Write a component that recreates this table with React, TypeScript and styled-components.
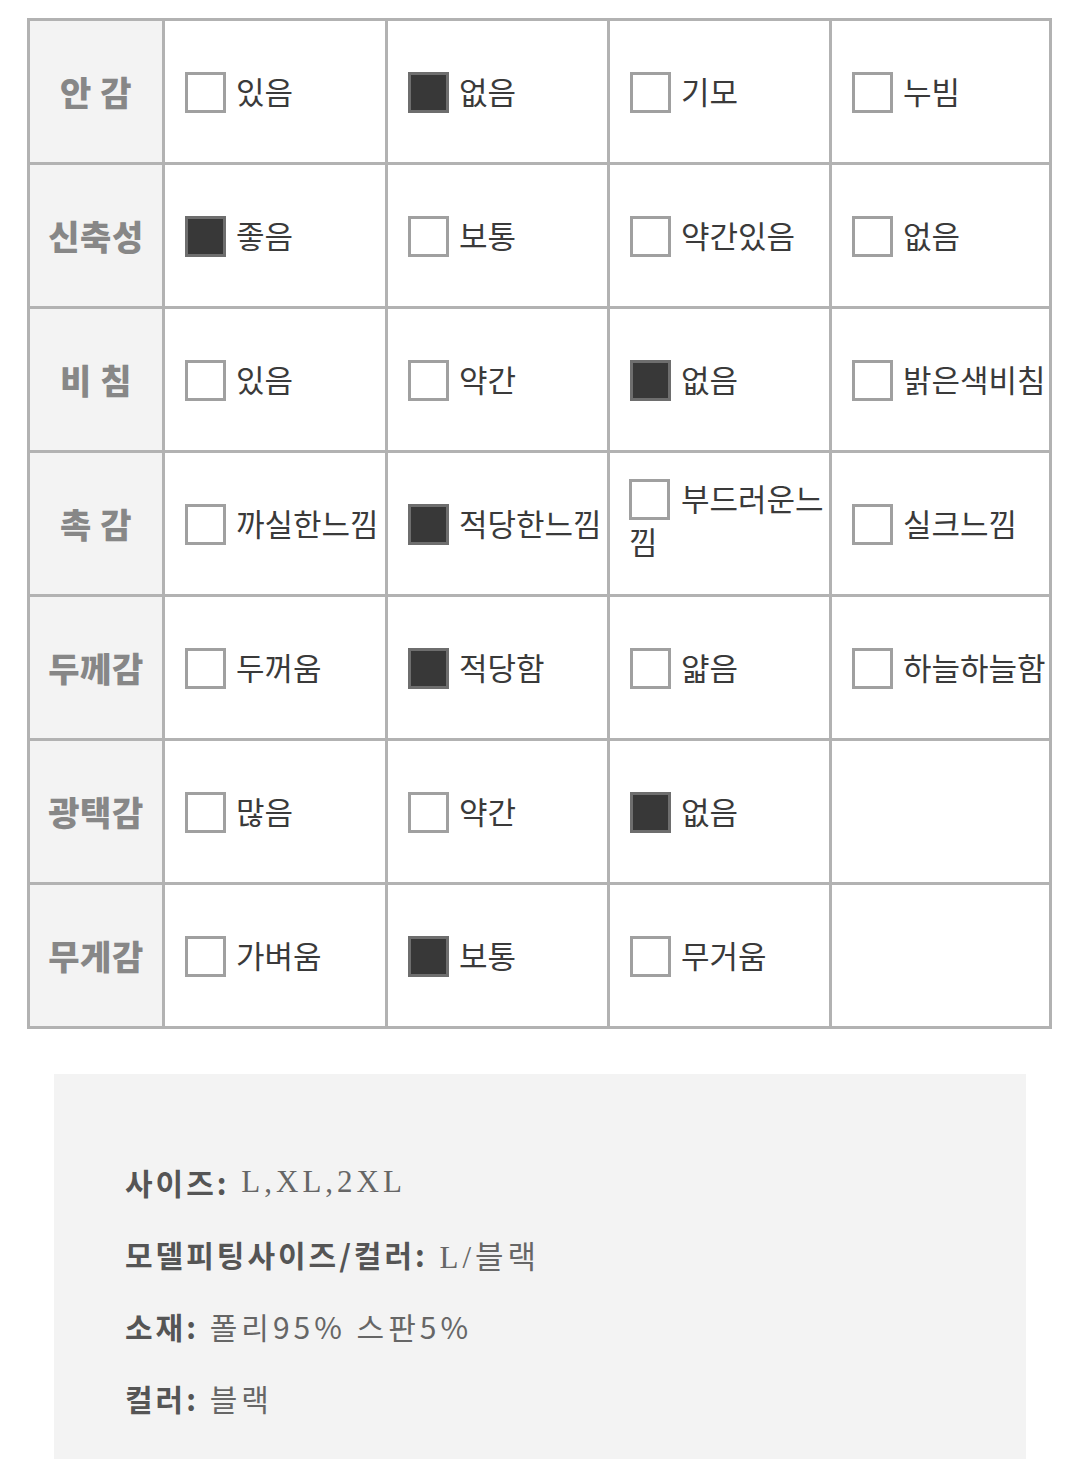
import styled, { createGlobalStyle } from 'styled-components';

const GlobalStyle = createGlobalStyle`
  body {
    margin: 0;
    background: #fff;
    font-family: "Noto Sans CJK KR", "Noto Sans", sans-serif;
  }
`;

interface IRow {
  label: string;
  options: string[];
  checked: number;
}

const rows: IRow[] = [
  { label: '안 감', options: ['있음', '없음', '기모', '누빔'], checked: 1 },
  { label: '신축성', options: ['좋음', '보통', '약간있음', '없음'], checked: 0 },
  { label: '비 침', options: ['있음', '약간', '없음', '밝은색비침'], checked: 2 },
  { label: '촉 감', options: ['까실한느낌', '적당한느낌', '부드러운느 낌', '실크느낌'], checked: 1 },
  { label: '두께감', options: ['두꺼움', '적당함', '얇음', '하늘하늘함'], checked: 1 },
  { label: '광택감', options: ['많음', '약간', '없음'], checked: 2 },
  { label: '무게감', options: ['가벼움', '보통', '무거움'], checked: 1 },
];

const info = [
  { label: '사이즈:', value: 'L,XL,2XL', serif: true },
  { label: '모델피팅사이즈/컬러:', value: 'L/블랙', serif: true },
  { label: '소재:', value: '폴리95% 스판5%', serif: false },
  { label: '컬러:', value: '블랙', serif: false },
];

const Page = styled.div`
  padding: 18px 28px 0 27px;
`;

const Table = styled.div`
  display: grid;
  grid-template-columns: 135px 223px 222px 222px 220px;
  grid-auto-rows: 144px;
  border-left: 3px solid #b2b2b2;
  border-top: 3px solid #b2b2b2;
`;

const HeadCell = styled.div`
  display: flex;
  align-items: center;
  justify-content: center;
  background: #f3f3f3;
  border-right: 3px solid #b2b2b2;
  border-bottom: 3px solid #b2b2b2;
  color: #878787;
  font-size: 34px;
  font-weight: 900;
  letter-spacing: 0.5px;
  white-space: pre;
`;

const Cell = styled.div`
  display: flex;
  align-items: center;
  padding: 0 0 0 20px;
  border-right: 3px solid #b2b2b2;
  border-bottom: 3px solid #b2b2b2;
  color: #3a3a3a;
  font-size: 31px;
  line-height: 42px;
  white-space: nowrap;
`;

const Label = styled.div<{ $wrap: boolean }>`
  display: block;
  margin-left: ${p => (p.$wrap ? '-1px' : '0')};
  margin-top: ${p => (p.$wrap ? '-8px' : '0')};
`;

const Box = styled.span<{ $on: boolean }>`
  display: inline-block;
  box-sizing: border-box;
  width: 41px;
  height: 41px;
  margin-right: 10px;
  vertical-align: -9px;
  border: 3px solid;
  background: ${p => (p.$on ? '#383838' : '#fff')};
  border-color: ${p => (p.$on ? '#6e6e6e' : '#a0a0a0')};
`;

const Gap = styled.span`
  display: inline-block;
  width: 1px;
`;

const InfoBox = styled.div`
  margin: 45px 26px 0 27px;
  background: #f3f3f3;
  padding: 72px 72px 24px 71px;
  min-height: 290px;
`;

const InfoLine = styled.div`
  height: 72px;
  display: flex;
  align-items: center;
  font-size: 30px;
  color: #555;
  white-space: pre;
`;

const InfoLabel = styled.span`
  font-weight: 700;
  letter-spacing: 3px;
  font-family: "Noto Sans CJK KR", sans-serif;
`;

const InfoValue = styled.span<{ $serif: boolean }>`
  font-family: ${p =>
    p.$serif ? '"Liberation Serif", "Noto Sans CJK KR", serif' : '"Noto Sans CJK KR", sans-serif'};
  font-size: ${p => (p.$serif ? '31px' : '30px')};
  letter-spacing: 4px;
  color: #666;
`;

const App = () => {
  return (
    <>
      <GlobalStyle />
      <Page>
        <Table>
          {rows.map(r => (
            <>
              <HeadCell key={r.label}>{r.label}</HeadCell>
              {[0, 1, 2, 3].map(i => {
                const opt = r.options[i];
                if (!opt) return <Cell key={i} />;
                const wrap = opt.includes(' ');
                return (
                  <Cell key={i}>
                    <Label $wrap={wrap}>
                      <Box $on={i === r.checked} />
                      {wrap ? (
                        <>
                          <Gap />
                          {opt.split(' ')[0]}
                          <br />
                          {opt.split(' ')[1]}
                        </>
                      ) : (
                        opt
                      )}
                    </Label>
                  </Cell>
                );
              })}
            </>
          ))}
        </Table>
        <InfoBox>
          {info.map(it => (
            <InfoLine key={it.label}>
              <InfoLabel>{it.label}</InfoLabel>
              <InfoValue $serif={it.serif}> {it.value}</InfoValue>
            </InfoLine>
          ))}
        </InfoBox>
      </Page>
    </>
  );
};

export default App;
